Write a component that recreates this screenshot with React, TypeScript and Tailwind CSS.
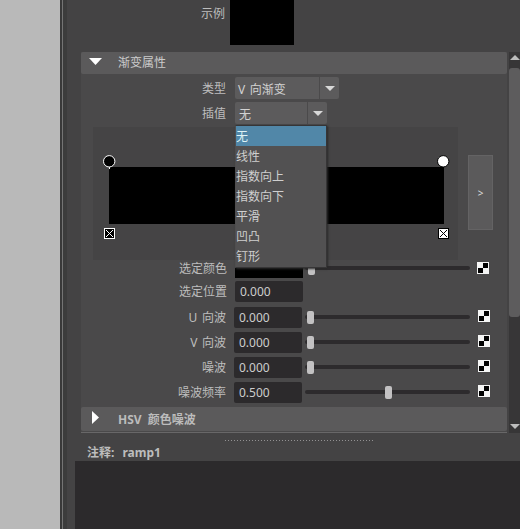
import type { ReactNode } from "react";

const menuItems = ["无", "线性", "指数向上", "指数向下", "平滑", "凹凸", "钉形"];

const waves = [
  { label: "U 向波", value: "0.000", pos: 2 },
  { label: "V 向波", value: "0.000", pos: 2 },
  { label: "噪波", value: "0.000", pos: 2 },
  { label: "噪波频率", value: "0.500", pos: 80 },
];

function Label({ children }: { children: ReactNode }) {
  return <div className="w-[145px] shrink-0 text-right">{children}</div>;
}

function Checker() {
  return (
    <svg width="12" height="12" viewBox="0 0 12 12" shapeRendering="crispEdges">
      <rect width="12" height="12" fill="#f4f4f4" />
      <path d="M6 1h5v5H6zM1 6h5v5H1z" fill="#000" />
    </svg>
  );
}

function Slider({ pos }: { pos: number }) {
  return (
    <div className="relative h-[13px] w-[165px] shrink-0 pt-1">
      <div className="h-1 rounded-sm bg-[#2d2b2d]" />
      <div
        className="absolute top-0 h-[13px] w-[7px] rounded-[2px] bg-[#c2c1c2]"
        style={{ left: pos }}
      />
    </div>
  );
}

function Field({ value }: { value: string }) {
  return (
    <div className="h-[21px] w-[68px] shrink-0 rounded-[2px] bg-[#2c2a2c] pl-[5px] leading-[21px] text-[#cdcdcd]">
      {value}
    </div>
  );
}

function Combo({ children, wide }: { children: ReactNode; wide?: boolean }) {
  return (
    <div
      className={
        "flex h-[22px] items-center rounded-[2px] bg-[#5c5b5c] " +
        (wide ? "w-[104px]" : "w-[92px]")
      }
    >
      <span className="flex-1 pl-[3px] pt-[3px] text-[#d2d2d2]">{children}</span>
      <div className="flex h-full w-[20px] items-center justify-center border-l border-[#4b4a4b]">
        <svg width="10" height="5" viewBox="0 0 10 5">
          <path d="M0 0h10L5 5z" fill="#d8d8d8" />
        </svg>
      </div>
    </div>
  );
}

// Position handle on top of the ramp, delete box underneath it.
function Handles({ light }: { light?: boolean }) {
  const fill = light ? "#fff" : "#000";
  const line = light ? "#000" : "#fff";
  return (
    <svg width="13" height="85" viewBox="0 0 13 85">
      <path d="M6.5 12v2" stroke={line} />
      <circle cx="6.2" cy="6.3" r="5.7" fill={fill} stroke={line} />
      <rect x="1.5" y="73.5" width="10" height="10" fill={fill} stroke={line} />
      <path d="M3 75l7 7M10 75l-7 7" stroke={line} />
    </svg>
  );
}

function Ramp() {
  return (
    <div className="ml-3 mt-0.5 flex h-[133px]">
      <div className="relative w-[365px] bg-[#454445] pl-4 pt-10">
        <div className="h-[57px] w-[335px] bg-black" />
        <div className="absolute left-[10px] top-[28px]">
          <Handles />
        </div>
        <div className="absolute left-[344px] top-[28px]">
          <Handles light />
        </div>
      </div>
      <div className="ml-[10px] mt-7 flex h-[75px] w-[25px] items-center justify-center border border-[#646364] bg-[#5b5a5b] text-[10px] text-[#dcdcdc]">
        &gt;
      </div>
    </div>
  );
}

function Menu() {
  return (
    <div className="absolute left-0 top-[23px] z-10 h-[143px] w-[92px] border border-[#363536] border-l-[#4f4e4f] bg-[#525152] text-[#cfcfcf] shadow-[1px_1px_2px_#2a2a2a]">
      {menuItems.map((item, i) => (
        <div
          key={item}
          className={
            "h-5 leading-[22px] " + (i === 0 ? "bg-[#5187a8] text-[#dff3f5]" : "")
          }
        >
          {item}
        </div>
      ))}
    </div>
  );
}

function ScrollBar() {
  return (
    <div className="ml-0.5 flex w-[11px] flex-col items-center bg-[#373637]">
      <svg className="mt-[3px]" width="10" height="5" viewBox="0 0 10 5">
        <path d="M0 5h10L5 0z" fill="#bdbdbd" />
      </svg>
      <div className="mt-2 h-[249px] w-full rounded-[3px] bg-[#5d5c5d]" />
      <svg className="mb-1 mt-auto" width="10" height="5" viewBox="0 0 10 5">
        <path d="M0 0h10L5 5z" fill="#bdbdbd" />
      </svg>
    </div>
  );
}

export default function App() {
  return (
    <div className="flex h-[529px] w-[520px] overflow-hidden bg-[#b9b9b9] font-['Noto_Sans','Noto_Sans_CJK_SC',sans-serif] text-[12px] leading-4 text-[#bdbdbd] [word-spacing:1.5px]">
      <div className="w-[60px] shrink-0" />
      <div className="w-[2px] shrink-0 bg-[#393939]" />
      <div className="w-px shrink-0 bg-[#747474]" />
      <div className="w-1 shrink-0 bg-[#3c3c3c]" />

      <div className="flex flex-1 flex-col bg-[#444344] pl-2">
        <div className="flex h-[52px] pl-[6px]">
          <div className="w-[144px] pt-[6px] text-right">示例</div>
          <div className="ml-[5px] h-[45px] w-16 bg-black" />
        </div>

        <div className="flex h-[381px] pl-[6px]">
          <div className="flex w-[426px] flex-col bg-[#4a494a]">
            <div className="flex h-[22px] shrink-0 items-center rounded-[2px] bg-[#5b5a5b] pl-2">
              <svg className="-mt-1" width="13" height="7" viewBox="0 0 13 7">
                <path d="M0 0h13L6.5 7z" fill="#fff" />
              </svg>
              <span className="ml-4 text-[#cbcbcb]">渐变属性</span>
            </div>

            <div className="mt-[3px] flex h-[22px] shrink-0 items-center gap-[9px]">
              <div className="pt-0.5">
                <Label>类型</Label>
              </div>
              <Combo wide>V 向渐变</Combo>
            </div>
            <div className="mt-[3px] flex h-[22px] shrink-0 items-center gap-[9px]">
              <div className="pt-0.5">
                <Label>插值</Label>
              </div>
              <div className="relative">
                <Combo>
                  <span className="pl-px">无</span>
                </Combo>
                <Menu />
              </div>
            </div>

            <div className="mt-px">
              <Ramp />
            </div>

            <div className="-mt-0.5 flex h-5 shrink-0 items-center">
              <div className="pl-px pt-px">
                <Label>选定颜色</Label>
              </div>
              <div className="ml-2 h-[19px] w-[68px] bg-black" />
              <div className="ml-[2px]">
                <Slider pos={3} />
              </div>
              <div className="ml-[7px]">
                <Checker />
              </div>
            </div>
            <div className="mt-[3px] flex h-[21px] shrink-0 items-center">
              <div className="pl-px">
                <Label>选定位置</Label>
              </div>
              <div className="ml-2">
                <Field value="0.000" />
              </div>
            </div>

            <div className="mt-[5px] flex flex-col gap-1">
              {waves.map((w) => (
                <div key={w.label} className="flex h-[21px] items-center">
                  <Label>{w.label}</Label>
                  <div className="ml-2">
                    <Field value={w.value} />
                  </div>
                  <div className="ml-[3px]">
                    <Slider pos={w.pos} />
                  </div>
                  <div className="-mt-[3px] ml-[8px]">
                    <Checker />
                  </div>
                </div>
              ))}
            </div>

            <div className="mt-1 flex h-6 shrink-0 items-center rounded-[2px] bg-[#5b5a5b] pl-[11px]">
              <svg className="-mt-[3px]" width="7" height="13" viewBox="0 0 7 13">
                <path d="M0 0v13l7-6.5z" fill="#fff" />
              </svg>
              <span className="ml-[19px] pt-0.5 font-bold text-[#bcbcbc] [word-spacing:3px]">
                HSV 颜色噪波
              </span>
            </div>
            <div className="mt-auto h-px shrink-0 bg-[#686768]" />
          </div>
          <ScrollBar />
        </div>

        <div className="flex h-7 flex-col">
          <svg className="ml-[150px] mt-[7px]" width="149" height="1" shapeRendering="crispEdges">
            <path d="M0 .5h149" stroke="#929192" strokeDasharray="1 2" />
          </svg>
          <div className="mt-1 flex gap-2 pl-3 font-bold">
            <span>注释:</span>
            <span>ramp1</span>
          </div>
        </div>
        <div className="flex-1 bg-[#2c2a2c]" />
      </div>
    </div>
  );
}
